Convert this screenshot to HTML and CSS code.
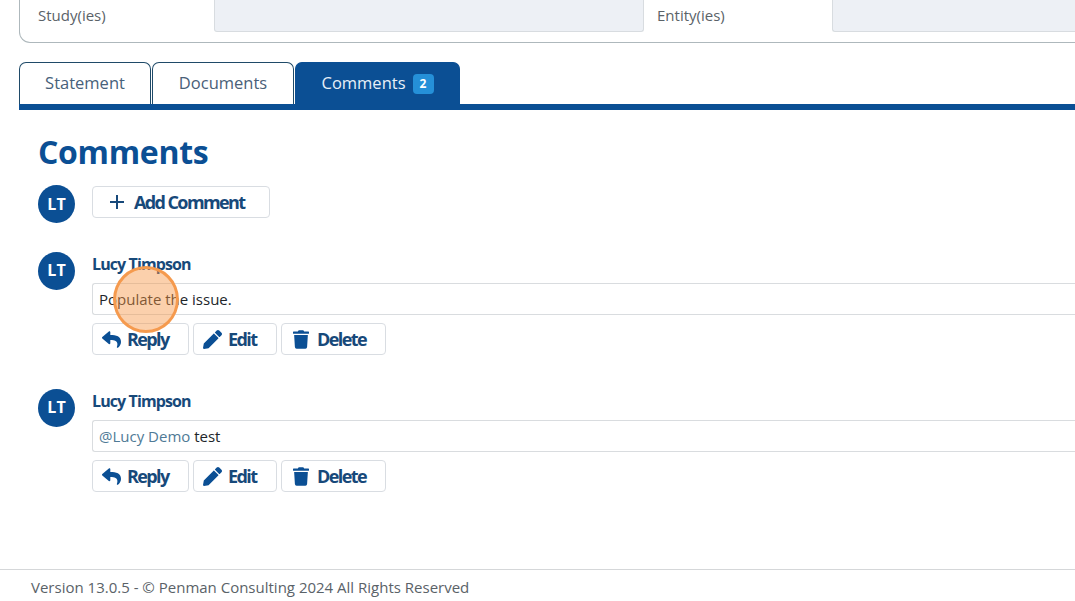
FILE: index.html
```html
<!DOCTYPE html>
<html lang="en">
<head>
<meta charset="utf-8">
<title>Comments</title>
<link rel="stylesheet" href="styles.css">
</head>
<body>
<main class="page">
  <section class="card">
    <span class="label label-study">Study(ies)</span>
    <div class="field field-study"></div>
    <span class="label label-entity">Entity(ies)</span>
    <div class="field field-entity"></div>
  </section>

  <nav class="tabs">
    <a class="tab tab-statement">Statement</a>
    <a class="tab tab-documents">Documents</a>
    <a class="tab tab-active">Comments <span class="badge">2</span></a>
  </nav>

  <section class="content">
    <h1 class="title">Comments</h1>
    <div class="add-row">
      <div class="avatar">LT</div>
      <button class="btn btn-add">
        <svg class="icon-plus" viewBox="0 0 16 16"><path d="M8 1v14M1 8h14"/></svg>
        Add Comment
      </button>
    </div>

    <article class="comment">
      <div class="avatar">LT</div>
      <div class="comment-body">
        <div class="author">Lucy Timpson</div>
        <div class="message">Populate the issue.</div>
        <div class="actions">
          <button class="btn btn-reply"><svg class="icon" viewBox="0 0 512 512"><path d="M8.309 189.836L184.313 37.851C199.719 24.546 224 35.347 224 56.015v80.053c160.629 1.839 288 34.032 288 186.258 0 61.441-39.581 122.309-83.333 154.132-13.653 9.931-33.111-2.533-28.077-18.631 45.344-145.012-21.507-183.51-176.59-185.742V360c0 20.7-24.3 31.453-39.687 18.164l-176.004-152c-11.071-9.562-11.086-26.753 0-36.328z"/></svg>Reply</button>
          <button class="btn btn-edit"><svg class="icon" viewBox="0 0 512 512"><path d="M497.9 142.1l-46.1 46.1c-4.7 4.7-12.3 4.7-17 0l-111-111c-4.7-4.7-4.7-12.3 0-17l46.1-46.1c18.7-18.7 49.1-18.7 67.9 0l60.1 60.1c18.8 18.7 18.8 49.1 0 67.9zM284.2 99.8L21.6 362.4.4 483.9c-2.9 16.4 11.4 30.6 27.8 27.8l121.5-21.3 262.6-262.6c4.7-4.7 4.7-12.3 0-17l-111-111c-4.8-4.7-12.4-4.7-17.1 0z"/></svg>Edit</button>
          <button class="btn btn-delete"><svg class="icon icon-trash" viewBox="0 0 448 512"><path d="M432 32H312l-9.4-18.7A24 24 0 0 0 281.1 0H166.8a23.72 23.72 0 0 0-21.4 13.3L136 32H16A16 16 0 0 0 0 48v32a16 16 0 0 0 16 16h416a16 16 0 0 0 16-16V48a16 16 0 0 0-16-16zM53.2 467a48 48 0 0 0 47.9 45h245.8a48 48 0 0 0 47.9-45L416 128H32z"/></svg>Delete</button>
        </div>
      </div>
    </article>

    <article class="comment">
      <div class="avatar">LT</div>
      <div class="comment-body">
        <div class="author">Lucy Timpson</div>
        <div class="message"><span class="mention">@Lucy Demo</span> test</div>
        <div class="actions">
          <button class="btn btn-reply"><svg class="icon" viewBox="0 0 512 512"><path d="M8.309 189.836L184.313 37.851C199.719 24.546 224 35.347 224 56.015v80.053c160.629 1.839 288 34.032 288 186.258 0 61.441-39.581 122.309-83.333 154.132-13.653 9.931-33.111-2.533-28.077-18.631 45.344-145.012-21.507-183.51-176.59-185.742V360c0 20.7-24.3 31.453-39.687 18.164l-176.004-152c-11.071-9.562-11.086-26.753 0-36.328z"/></svg>Reply</button>
          <button class="btn btn-edit"><svg class="icon" viewBox="0 0 512 512"><path d="M497.9 142.1l-46.1 46.1c-4.7 4.7-12.3 4.7-17 0l-111-111c-4.7-4.7-4.7-12.3 0-17l46.1-46.1c18.7-18.7 49.1-18.7 67.9 0l60.1 60.1c18.8 18.7 18.8 49.1 0 67.9zM284.2 99.8L21.6 362.4.4 483.9c-2.9 16.4 11.4 30.6 27.8 27.8l121.5-21.3 262.6-262.6c4.7-4.7 4.7-12.3 0-17l-111-111c-4.8-4.7-12.4-4.7-17.1 0z"/></svg>Edit</button>
          <button class="btn btn-delete"><svg class="icon icon-trash" viewBox="0 0 448 512"><path d="M432 32H312l-9.4-18.7A24 24 0 0 0 281.1 0H166.8a23.72 23.72 0 0 0-21.4 13.3L136 32H16A16 16 0 0 0 0 48v32a16 16 0 0 0 16 16h416a16 16 0 0 0 16-16V48a16 16 0 0 0-16-16zM53.2 467a48 48 0 0 0 47.9 45h245.8a48 48 0 0 0 47.9-45L416 128H32z"/></svg>Delete</button>
        </div>
      </div>
    </article>
  </section>
</main>

<footer class="footer">Version 13.0.5 - © Penman Consulting 2024 All Rights Reserved</footer>

<div class="click-marker"></div>
</body>
</html>
```

FILE: styles.css
```css
* { box-sizing: border-box; }

html, body {
  margin: 0;
  height: 601px;
  overflow: hidden;
}

body {
  position: relative;
  width: 1075px;
  background: #fff;
  font-family: "Open Sans", "Liberation Sans", sans-serif;
  font-size: 15px;
  color: #212529;
  display: flex;
  flex-direction: column;
}

.page {
  flex: 1;
  padding-left: 19px;
}

/* Top card, cut off by the window */
.card {
  display: flex;
  height: 43px;
  border: 1px solid #aeb8bc;
  border-top: 0;
  border-right: 0;
  border-bottom-left-radius: 11px;
}

.label {
  font-size: 15px;
  line-height: 20px;
  height: 20px;
  margin-top: 5px;
  color: #5a6268;
}

.label-study { width: 176px; margin-left: 18px; }
.label-entity { width: 175px; margin-left: 13px; }

.field {
  height: 32px;
  background: #edf0f5;
  border: 1px solid #d8dce0;
  border-top: 0;
  border-bottom-left-radius: 3px;
  border-bottom-right-radius: 3px;
}

.field-study { width: 430px; }
.field-entity { flex: 1; border-right: 0; border-bottom-right-radius: 0; }

/* Tabs */
.tabs {
  display: flex;
  gap: 1px;
  margin-top: 19px;
  height: 48px;
  border-bottom: 6px solid #0b4f94;
}

.tab {
  display: flex;
  align-items: center;
  justify-content: center;
  height: 42px;
  padding-bottom: 3px;
  font-size: 16.5px;
  border: 1px solid #1f4a68;
  border-bottom: 0;
  border-radius: 7px 7px 0 0;
  color: #4a6078;
  background: #fff;
}

.tab-statement { width: 132px; color: #47617a; }
.tab-documents { width: 142px; }

.tab-active {
  width: 165px;
  gap: 7px;
  background: #0b4f94;
  border-color: #0b4f94;
  color: #e8f0f8;
}

.badge {
  width: 21px;
  height: 20px;
  margin-top: 4px;
  border-radius: 4px;
  background: #2590d8;
  color: #fff;
  font-size: 12px;
  font-weight: 700;
  line-height: 20px;
  text-align: center;
}

/* Comments */
.content { padding-left: 19px; }

.title {
  margin: 20px 0 0;
  height: 44px;
  font-size: 32px;
  line-height: 44px;
  font-weight: 700;
  letter-spacing: -0.3px;
  color: #0b4f94;
}

.add-row {
  display: flex;
  gap: 17px;
  margin-top: 11px;
  height: 67px;
}

.avatar {
  flex: none;
  width: 37px;
  height: 38px;
  border-radius: 50%;
  background: #0b4f94;
  color: #fff;
  font-size: 16px;
  font-weight: 700;
  line-height: 38px;
  text-align: center;
}

.comment .avatar { line-height: 36px; }

.btn {
  display: inline-flex;
  align-items: center;
  height: 32px;
  padding: 0;
  background: #fff;
  border: 1px solid #d9dde2;
  border-radius: 4px;
  color: #17497a;
  font-family: inherit;
  font-size: 18px;
  font-weight: 700;
  letter-spacing: -1.6px;
}

.btn-add {
  width: 178px;
  margin-top: 1px;
  padding-left: 16px;
  gap: 9px;
}

.icon-plus {
  width: 16px;
  height: 16px;
  fill: none;
  stroke: #17497a;
  stroke-width: 2;
}

.comment {
  display: flex;
  gap: 17px;
  height: 137px;
}

.comment-body {
  flex: 1;
  min-width: 0;
}

.author {
  height: 31px;
  padding-top: 2px;
  font-size: 16px;
  line-height: 20px;
  font-weight: 700;
  letter-spacing: -0.9px;
  color: #17497a;
}

.message {
  height: 32px;
  padding-left: 6px;
  border: 1px solid #d9dcdf;
  border-right: 0;
  border-radius: 3px 0 0 3px;
  font-size: 15px;
  line-height: 31px;
  color: #212529;
}

.mention { color: #4f7a96; }

.actions {
  display: flex;
  gap: 4px;
  margin-top: 8px;
}

.icon {
  width: 19px;
  height: 19px;
  fill: #0b4f94;
}

.icon-trash { width: 16px; }

.btn-reply { width: 97px; padding-left: 9px; gap: 6px; }
.btn-edit { width: 84px; padding-left: 9px; gap: 6px; }
.btn-delete { width: 105px; padding-left: 11px; gap: 8px; }

/* Footer */
.footer {
  height: 32px;
  padding-left: 31px;
  border-top: 1px solid #d5d7d9;
  font-size: 15px;
  line-height: 35px;
  color: #5a6268;
}

/* Click highlight of the recording tool */
.click-marker {
  position: absolute;
  left: 113px;
  top: 266px;
  width: 66px;
  height: 67px;
  border-radius: 50%;
  background: rgba(247, 150, 70, 0.45);
  border: 3px solid #f59a4e;
}
```
